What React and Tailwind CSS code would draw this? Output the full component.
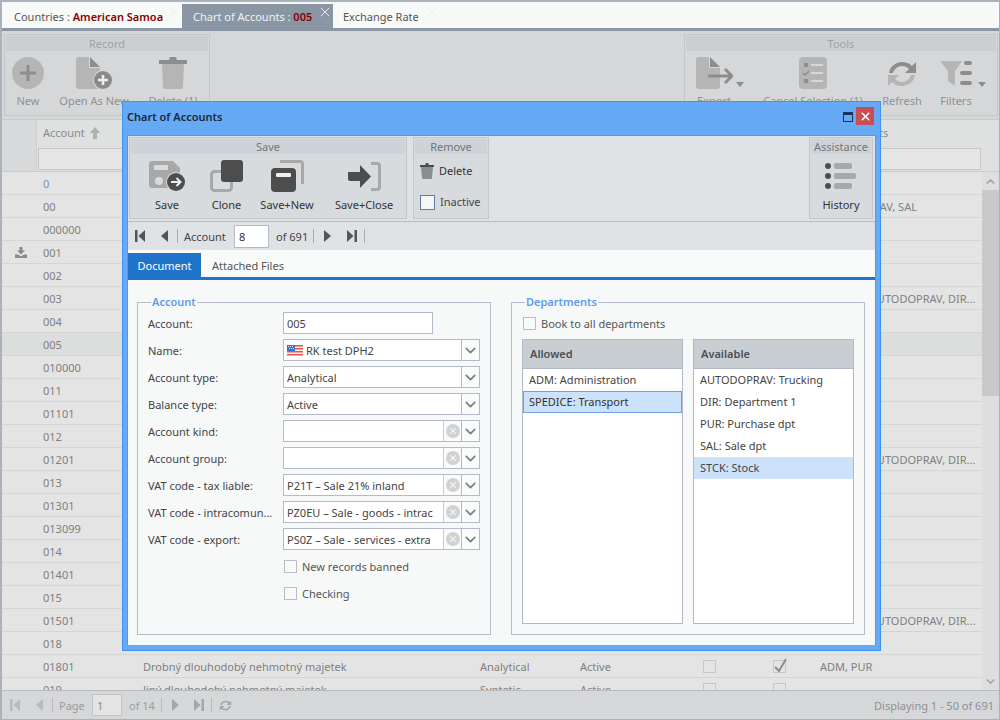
import React from "react";
import { ChevronDown, ChevronUp, X } from "lucide-react";

const rows = [
  { a: "0", blue: true },
  { a: "00", dep: "AUTODOPRAV, SAL" },
  { a: "000000" },
  { a: "001", icon: true },
  { a: "002" },
  { a: "003", dep: "ADM, AUTODOPRAV, DIR...", far: true },
  { a: "004" },
  { a: "005", sel: true },
  { a: "010000" },
  { a: "011" },
  { a: "01101" },
  { a: "012" },
  { a: "01201", dep: "ADM, AUTODOPRAV, DIR...", far: true },
  { a: "013" },
  { a: "01301" },
  { a: "013099" },
  { a: "014" },
  { a: "01401" },
  { a: "015" },
  { a: "01501", dep: "ADM, AUTODOPRAV, DIR...", far: true },
  { a: "018" },
  { a: "01801", name: "Drobný dlouhodobý nehmotný majetek", type: "Analytical", bal: "Active", box: true, check: true, dep: "ADM, PUR" },
  { a: "019", name: "Jiný dlouhodobý nehmotný majetek", type: "Syntetic", bal: "Active", box: true, box2: true },
];

function Group({ title, className, children }) {
  return (
    <div className={"flex flex-col border border-[#c4c6c9] p-px " + className}>
      <div className="h-[15px] shrink-0 bg-[#cccfd2] text-center text-[11px] leading-[15px] text-[#a0a2a5]">{title}</div>
      <div className="relative flex-1 overflow-hidden">{children}</div>
    </div>
  );
}

function ToolBtn({ label, width, children }) {
  return (
    <div className="flex shrink-0 flex-col items-center pt-[6px]" style={{ width }}>
      <div className="h-[32px]">{children}</div>
      <div className="mt-[4px] whitespace-nowrap text-[11px] leading-[16px] text-[#8f9194]">{label}</div>
    </div>
  );
}

function DocShape() {
  return (
    <>
      <path d="M3 0h10v11h11v18a3 3 0 0 1-3 3H3a3 3 0 0 1-3-3V3a3 3 0 0 1 3-3z" fill="#b5b5b5" />
      <path d="M14 0l10 10H14z" fill="#8d8d8d" />
    </>
  );
}

function MainToolbar() {
  return (
    <div className="flex h-[88px] shrink-0 justify-between bg-[#d6d7d9] pl-[2px] pr-[1px] pt-[3px]">
      <Group title="Record" className="h-[82px] w-[206px]">
        <div className="flex">
          <ToolBtn label="New" width={44}>
            <svg width="32" height="32" viewBox="0 0 32 32">
              <circle cx="16" cy="16" r="16" fill="#b5b5b5" />
              <path d="M16 8v16M8 16h16" stroke="#8d8d8d" strokeWidth="3" />
            </svg>
          </ToolBtn>
          <ToolBtn label="Open As New" width={88}>
            <svg width="37" height="33" viewBox="0 0 37 33">
              <DocShape />
              <circle cx="27" cy="23" r="10" fill="#d6d7d9" />
              <circle cx="27" cy="23" r="9" fill="#8a8a8a" />
              <path d="M27 18v10M22 23h10" stroke="#eee" strokeWidth="2.5" />
            </svg>
          </ToolBtn>
          <ToolBtn label="Delete (1)" width={70}>
            <svg width="28" height="32" viewBox="0 0 28 32">
              <path d="M0 3h10l1-3h6l1 3h10v4H0z" fill="#8d8d8d" />
              <path d="M3 7h22l-1 23a2 2 0 0 1-2 2H6a2 2 0 0 1-2-2z" fill="#b5b5b5" />
            </svg>
          </ToolBtn>
        </div>
      </Group>
      <Group title="Tools" className="h-[82px] w-[314px]">
        <div className="flex">
          <div className="flex w-[50px] shrink-0 justify-end">
            <ToolBtn label="Export" width={44}>
              <svg width="37" height="32" viewBox="0 0 37 32">
                <DocShape />
                <path d="M12 19h23M29 12l7 7-7 7" fill="none" stroke="#8d8d8d" strokeWidth="3" />
              </svg>
            </ToolBtn>
          </div>
          <svg className="mt-[31px] shrink-0" width="8" height="5" viewBox="0 0 8 5">
            <path d="M0 0h8L4 5z" fill="#8d8d8d" />
          </svg>
          <ToolBtn label="Cancel Selection (1)" width={138}>
            <svg width="28" height="32" viewBox="0 0 28 32">
              <rect width="28" height="32" rx="4" fill="#b5b5b5" />
              <path d="M5 6h4v4H5zM5 22h4v4H5z" fill="#8d8d8d" />
              <path d="M4 16l2 2 4-4" fill="none" stroke="#8d8d8d" strokeWidth="1.5" />
              <path d="M12 8h12M12 16h12M12 24h12" stroke="#d6d7d9" strokeWidth="2" />
            </svg>
          </ToolBtn>
          <ToolBtn label="Refresh" width={40}>
            <svg className="mt-[2px]" width="32" height="30" viewBox="0 0 32 30">
              <path d="M3 14C4 7 10 3 16 3c4 0 7 1 10 4l4-4v11H19l4-4c-2-2-4-3-7-3-4 0-8 3-9 7z" fill="#8d8d8d" />
              <path d="M29 16c-1 7-7 11-13 11-4 0-7-1-10-4l-4 4V16h11l-4 4c2 2 4 3 7 3 4 0 8-3 9-7z" fill="#b5b5b5" />
            </svg>
          </ToolBtn>
          <div className="flex w-[56px] shrink-0 justify-end">
            <ToolBtn label="Filters" width={44}>
              <svg className="mt-[3px]" width="33" height="26" viewBox="0 0 33 26">
                <path d="M0 1h22l-7 10v15l-7-5V11z" fill="#b5b5b5" />
                <rect x="24" y="1" width="8" height="4" rx="2" fill="#8d8d8d" />
                <rect x="20" y="11" width="12" height="4" rx="2" fill="#8d8d8d" />
                <rect x="20" y="21" width="12" height="4" rx="2" fill="#8d8d8d" />
              </svg>
            </ToolBtn>
          </div>
          <svg className="mt-[31px] shrink-0" width="8" height="5" viewBox="0 0 8 5">
            <path d="M0 0h8L4 5z" fill="#8d8d8d" />
          </svg>
        </div>
      </Group>
    </div>
  );
}

function GridCheck({ on }) {
  return (
    <div className="relative h-[13px] w-[13px] border border-[#c6c7c8]">
      {on && (
        <svg className="absolute -left-px -top-[3px]" width="15" height="16" viewBox="0 0 15 16">
          <path d="M2 9l4 4 7-12" fill="none" stroke="#8d8d8d" strokeWidth="2" />
        </svg>
      )}
    </div>
  );
}

function Grid() {
  return (
    <div className="flex min-h-0 flex-1 flex-col bg-[#e4e4e4] text-[11px] text-[#808080]">
      <div className="flex h-[53px] shrink-0 border-y border-[#c8cacc] bg-[#dfe0e0]">
        <div className="w-[35px] shrink-0 border-r border-[#cfd0d2] bg-[#d8d9db]" />
        <div className="flex-1">
          <div className="flex h-[28px] items-center pb-[2px] pl-[6px] text-[#8a8a8a]">
            <div className="flex w-[777px] shrink-0 items-center">
              Account
              <svg className="ml-[5px]" width="10" height="12" viewBox="0 0 10 12">
                <path d="M5 0l5 6H7v6H3V6H0z" fill="#b0b0b0" />
              </svg>
            </div>
            Departments
          </div>
          <div className="ml-[1px] mr-[18px] h-[22px] border border-[#c4c6c8] bg-[#e6e6e6]" />
        </div>
      </div>
      <div className="flex min-h-0 flex-1">
        <div className="min-w-0 flex-1 overflow-hidden">
          {rows.map((r) => (
            <div key={r.a} className={"flex h-[23px] shrink-0 items-center border-b border-[#d4d5d5] " + (r.sel ? "bg-[#dcdddd]" : "")}>
              <div className="flex w-[36px] shrink-0 justify-center pl-[2px]">
                {r.icon && (
                  <svg width="12" height="11" viewBox="0 0 12 11">
                    <path d="M4.5 0h3v3.5H10L6 7.5 2 3.5h2.5zM0 7.5h3l3 2 3-2h3V11H0z" fill="#8a8a8a" />
                  </svg>
                )}
              </div>
              <div className={"w-[105px] shrink-0 pl-[5px] pt-[2px] " + (r.blue ? "text-[#7b93ad]" : "")}>{r.a}</div>
              <div className="w-[337px] shrink-0 whitespace-nowrap pt-[2px]">{r.name}</div>
              <div className="w-[100px] shrink-0 pt-[2px]">{r.type}</div>
              <div className="w-[123px] shrink-0 pt-[2px]">{r.bal}</div>
              <div className="w-[70px] shrink-0">{r.box && <GridCheck />}</div>
              <div className="w-[47px] shrink-0">{(r.check || r.box2) && <GridCheck on={r.check} />}</div>
              <div className={"whitespace-nowrap pt-[2px] " + (r.far ? "pl-[19px]" : "")}>{r.dep}</div>
            </div>
          ))}
        </div>
        <div className="flex w-[17px] shrink-0 flex-col bg-[#dedede]">
          <div className="flex h-[18px] shrink-0 items-center justify-center">
            <ChevronUp size={13} strokeWidth={3} color="#a8a8a8" />
          </div>
          <div className="h-[206px] shrink-0 bg-[#c9c9c9]" />
          <div className="flex-1" />
          <div className="flex h-[18px] shrink-0 items-center justify-center">
            <ChevronDown size={13} strokeWidth={3} color="#a8a8a8" />
          </div>
        </div>
      </div>
    </div>
  );
}

function NavGlyph({ kind, color }) {
  const d = {
    first: "M0 0h2.5v12H0zM10 0v12L3.5 6z",
    prev: "M8 0v12L1 6z",
    next: "M1 0v12l7-6z",
    last: "M0 0v12l6.5-6zM7.5 0H10v12H7.5z",
  }[kind];
  return (
    <svg width="11" height="12" viewBox="0 0 11 12" className="shrink-0">
      <path d={d} fill={color} />
    </svg>
  );
}

function Pager() {
  return (
    <div className="flex h-[29px] shrink-0 items-center border-t border-[#b8bcc0] bg-[#d6d7d9] pl-[8px] pr-[5px] text-[11px] text-[#9a9c9e]">
      <NavGlyph kind="first" color="#b8babc" />
      <div className="w-[14px]" />
      <NavGlyph kind="prev" color="#b8babc" />
      <div className="ml-[6px] h-[14px] w-px bg-[#b8babc]" />
      <span className="ml-[6px] w-[33px] pt-[2px]">Page</span>
      <div className="flex h-[22px] w-[30px] items-center border border-[#c2c4c6] bg-[#e4e4e4] pl-[4px] pt-[2px] text-[#8c8c8c]">1</div>
      <span className="ml-[7px] w-[32px] pt-[2px]">of 14</span>
      <div className="h-[14px] w-px bg-[#b8babc]" />
      <div className="ml-[9px]"><NavGlyph kind="next" color="#a4a6a8" /></div>
      <div className="ml-[12px]"><NavGlyph kind="last" color="#a4a6a8" /></div>
      <div className="ml-[6px] h-[14px] w-px bg-[#b8babc]" />
      <svg className="ml-[7px]" width="13" height="13" viewBox="0 0 32 30">
        <path d="M3 14C4 7 10 3 16 3c4 0 7 1 10 4l4-4v11H19l4-4c-2-2-4-3-7-3-4 0-8 3-9 7z" fill="#a4a6a8" />
        <path d="M29 16c-1 7-7 11-13 11-4 0-7-1-10-4l-4 4V16h11l-4 4c2 2 4 3 7 3 4 0 8-3 9-7z" fill="#a4a6a8" />
      </svg>
      <span className="ml-auto pt-[2px] text-[#8f9193]">Displaying 1 - 50 of 691</span>
    </div>
  );
}

function SaveBtn({ label, width, children }) {
  return (
    <div className="flex shrink-0 flex-col items-center" style={{ width }}>
      <div className="flex h-[32px] items-center">{children}</div>
      <div className="mt-[5px] whitespace-nowrap text-[11px] leading-[16px] text-[#333]">{label}</div>
    </div>
  );
}

function ModalGroup({ title, className, children }) {
  return (
    <div className={"flex h-[82px] shrink-0 flex-col border border-[#c3c7ca] bg-[#d8dbde] p-px " + className}>
      <div className="h-[15px] shrink-0 bg-[#ced3d8] text-center text-[11px] leading-[15px] text-[#72767a]">{title}</div>
      {children}
    </div>
  );
}

function ModalToolbar() {
  return (
    <div className="flex h-[86px] shrink-0 border-b border-[#b7bcc0] bg-[#dfe2e5] pl-[1px] pr-[2px] pt-[1px]">
      <ModalGroup title="Save" className="w-[278px]">
        <div className="flex pl-[6px] pt-[6px]">
          <SaveBtn label="Save" width={60}>
            <svg width="37" height="30" viewBox="0 0 37 30">
              <path d="M3 0h21l7 7v20H3a3 3 0 0 1-3-3V3a3 3 0 0 1 3-3z" fill="#a8a8a8" />
              <path d="M5 4h14v5H5z" fill="#d8dbde" />
              <circle cx="10" cy="20" r="4" fill="#d8dbde" />
              <circle cx="27" cy="21" r="10" fill="#d8dbde" />
              <circle cx="27" cy="21" r="9" fill="#4d4d4d" />
              <path d="M22 21h9M27.5 17l4 4-4 4" fill="none" stroke="#eee" strokeWidth="2" />
            </svg>
          </SaveBtn>
          <SaveBtn label="Clone" width={59}>
            <svg width="33" height="32" viewBox="0 0 33 32">
              <rect x="1.5" y="11.5" width="20" height="19" rx="3" fill="none" stroke="#a8a8a8" strokeWidth="3" />
              <rect x="11" y="0" width="22" height="22" rx="3" fill="#4d4d4d" />
            </svg>
          </SaveBtn>
          <SaveBtn label="Save+New" width={62}>
            <svg width="33" height="32" viewBox="0 0 33 32">
              <path d="M9 1.5h20a2.5 2.5 0 0 1 2.5 2.5v20" fill="none" stroke="#a8a8a8" strokeWidth="3" />
              <rect x="0" y="8" width="25" height="24" rx="4" fill="#4d4d4d" />
              <rect x="5" y="13" width="15" height="4" rx="1" fill="#eee" />
            </svg>
          </SaveBtn>
          <SaveBtn label="Save+Close" width={92}>
            <svg width="33" height="29" viewBox="0 0 33 29">
              <path d="M0 10h12V3l11 11.5L12 26v-7H2a2 2 0 0 1-2-2z" fill="#4d4d4d" />
              <path d="M23 1.5h6a2.5 2.5 0 0 1 2.5 2.5v21a2.5 2.5 0 0 1-2.5 2.5h-6" fill="none" stroke="#a8a8a8" strokeWidth="3" />
            </svg>
          </SaveBtn>
        </div>
      </ModalGroup>
      <ModalGroup title="Remove" className="ml-[6px] w-[76px]">
        <div className="mt-[9px] flex h-[16px] items-center pl-[5px] text-[11px] text-[#333]">
          <svg width="14" height="16" viewBox="0 0 14 16">
            <path d="M0 2h5l1-2h2l1 2h5v2H0z" fill="#4d4d4d" />
            <path d="M1 4h12l-1 11a1 1 0 0 1-1 1H3a1 1 0 0 1-1-1z" fill="#8d8d8d" />
          </svg>
          <span className="ml-[5px]">Delete</span>
        </div>
        <div className="mt-[15px] flex h-[16px] items-center pl-[5px] text-[11px] text-[#444]">
          <div className="h-[15px] w-[15px] shrink-0 border border-[#5f7d9c] bg-[#f4f6f8]" />
          <span className="ml-[5px]">Inactive</span>
        </div>
      </ModalGroup>
      <ModalGroup title="Assistance" className="ml-auto w-[64px]">
        <div className="flex flex-col items-center pt-[8px]">
          <svg width="32" height="28" viewBox="0 0 32 28">
            <circle cx="3" cy="4" r="3" fill="#4d4d4d" />
            <circle cx="3" cy="14" r="3" fill="#4d4d4d" />
            <circle cx="3" cy="24" r="3" fill="#4d4d4d" />
            <rect x="9" y="1" width="18" height="6" rx="2" fill="#a8a8a8" />
            <rect x="9" y="11" width="22" height="6" rx="2" fill="#a8a8a8" />
            <rect x="9" y="21" width="18" height="6" rx="2" fill="#a8a8a8" />
          </svg>
          <div className="mt-[7px] text-[11px] leading-[16px] text-[#333]">History</div>
        </div>
      </ModalGroup>
    </div>
  );
}

function Sep() {
  return <div className="h-[14px] w-px bg-[#a9adb1]" />;
}

function ModalNav() {
  return (
    <div className="flex h-[28px] shrink-0 items-center bg-[#dfe2e5] pl-[7px] text-[11px] text-[#444]">
      <NavGlyph kind="first" color="#555" />
      <div className="w-[14px]" />
      <NavGlyph kind="prev" color="#555" />
      <div className="ml-[6px]"><Sep /></div>
      <span className="ml-[6px] w-[50px] pt-[2px]">Account</span>
      <div className="flex h-[23px] w-[35px] items-center border border-[#b5bac9] bg-white pl-[4px] pt-[2px] text-[#333]">8</div>
      <span className="ml-[7px] w-[37px] pt-[2px]">of 691</span>
      <Sep />
      <div className="ml-[9px]"><NavGlyph kind="next" color="#555" /></div>
      <div className="ml-[13px]"><NavGlyph kind="last" color="#555" /></div>
      <div className="ml-[6px]"><Sep /></div>
    </div>
  );
}

function Checkbox({ label }) {
  return (
    <div className="flex items-center text-[11px] text-[#555]">
      <div className="h-[13px] w-[13px] shrink-0 border border-[#b9bdc4] bg-[#f8fafa]" />
      <span className="ml-[5px] pt-[2px]">{label}</span>
    </div>
  );
}

function UsFlag() {
  return (
    <svg className="mr-[3px] shrink-0" width="16" height="11" viewBox="0 0 16 11">
      <rect width="16" height="11" fill="#f4f4f4" />
      <path d="M0 0h16v1.5H0zM0 3h16v1.5H0zM0 6h16v1.5H0zM0 9h16v1.5H0z" fill="#e2574c" />
      <rect width="8" height="6" fill="#3f6fc0" />
      <path d="M1 1h1v1H1zM3 1h1v1H3zM5 1h1v1H5zM2 3h1v1H2zM4 3h1v1H4zM6 3h1v1H6z" fill="#e6ecf7" />
    </svg>
  );
}

function FormRow({ label, children }) {
  return (
    <div className="mb-[5px] flex h-[22px] items-center">
      <div className="w-[135px] shrink-0 whitespace-nowrap pt-[2px] text-[11px] text-[#444]">{label}</div>
      {children}
    </div>
  );
}

function Combo({ value, flag, clear }) {
  return (
    <div className="flex h-[22px] w-[197px] shrink-0 border border-[#b5bac9] bg-white text-[11px] text-[#444]">
      <div className="flex min-w-0 flex-1 items-center overflow-hidden whitespace-nowrap pl-[3px]">
        {flag && <UsFlag />}
        {value && <span className="pt-[2px]">{value}</span>}
      </div>
      {clear && (
        <div className="flex w-[18px] shrink-0 items-center justify-center border-l border-[#c8ccd6] bg-[#fafbfb]">
          <div className="flex h-[14px] w-[14px] items-center justify-center rounded-full bg-[#d2d2d2]">
            <X size={10} strokeWidth={2.5} color="#fff" />
          </div>
        </div>
      )}
      <div className="flex w-[18px] shrink-0 items-center justify-center border-l border-[#b5bac9] bg-[#fafbfb]">
        <ChevronDown size={17} strokeWidth={2.5} color="#7d8287" />
      </div>
    </div>
  );
}

function AccountSet() {
  return (
    <fieldset className="h-[341px] w-[354px] shrink-0 border border-[#b7bccd] px-[10px] pb-0">
      <legend className="ml-[3px] px-[1px] text-[11px] font-semibold leading-[16px] text-[#5f9bf0]">Account</legend>
      <div className="pt-[2px]">
        <FormRow label="Account:">
          <div className="flex h-[22px] w-[150px] items-center border border-[#b5bac9] bg-white pl-[3px] pt-[2px] text-[11px] text-[#444]">005</div>
        </FormRow>
        <FormRow label="Name:"><Combo value="RK test DPH2" flag /></FormRow>
        <FormRow label="Account type:"><Combo value="Analytical" /></FormRow>
        <FormRow label="Balance type:"><Combo value="Active" /></FormRow>
        <FormRow label="Account kind:"><Combo clear /></FormRow>
        <FormRow label="Account group:"><Combo clear /></FormRow>
        <FormRow label="VAT code - tax liable:"><Combo clear value="P21T – Sale 21% inland" /></FormRow>
        <FormRow label="VAT code - intracomun..."><Combo clear value="PZ0EU – Sale - goods - intrac" /></FormRow>
        <FormRow label="VAT code - export:"><Combo clear value="PS0Z – Sale - services - extra" /></FormRow>
        <div className="mb-[5px] flex h-[22px] items-center pl-[136px]"><Checkbox label="New records banned" /></div>
        <div className="flex h-[22px] items-center pl-[136px]"><Checkbox label="Checking" /></div>
      </div>
    </fieldset>
  );
}

function DeptList({ title, items, focus, sel }) {
  return (
    <div className="flex h-[285px] w-[161px] flex-col border border-[#b3b9c6] bg-white text-[11px]">
      <div className="flex h-[29px] shrink-0 items-center border-b border-[#b3b9c6] bg-[#c9ced2] pl-[7px] font-semibold text-[#4a4f55]">{title}</div>
      {items.map((it) => (
        <div
          key={it}
          className={
            "flex h-[22px] shrink-0 items-center " +
            (it === focus
              ? "border border-[#6ea2e0] bg-[#cce2fa] pl-[5px] text-[#333]"
              : it === sel
                ? "bg-[#cce2fa] pl-[6px] text-[#444]"
                : "pl-[6px] text-[#444]")
          }
        >
          {it}
        </div>
      ))}
    </div>
  );
}

function DepartmentsSet() {
  return (
    <fieldset className="ml-[20px] h-[341px] w-[354px] shrink-0 border border-[#b7bccd] px-[10px] pb-0">
      <legend className="ml-[3px] px-[1px] text-[11px] font-semibold leading-[16px] text-[#5f9bf0]">Departments</legend>
      <div className="mb-[5px] mt-[2px] flex h-[22px] items-center pl-[1px]"><Checkbox label="Book to all departments" /></div>
      <div className="flex gap-[10px]">
        <DeptList title="Allowed" items={["ADM: Administration", "SPEDICE: Transport"]} focus="SPEDICE: Transport" />
        <DeptList
          title="Available"
          items={["AUTODOPRAV: Trucking", "DIR: Department 1", "PUR: Purchase dpt", "SAL: Sale dpt", "STCK: Stock"]}
          sel="STCK: Stock"
        />
      </div>
    </fieldset>
  );
}

function Modal() {
  return (
    <div className="absolute left-[120px] top-[99px] flex h-[550px] w-[759px] flex-col border border-[#3f93ee] bg-[#66aaf6]">
      <div className="flex h-[33px] shrink-0 items-start pl-[4px] pr-[6px] pt-[5px]">
        <span className="pt-[1px] text-[11px] font-semibold leading-[18px] text-[#1c2733]">Chart of Accounts</span>
        <svg className="ml-auto mt-[5px]" width="10" height="10" viewBox="0 0 10 10">
          <rect x="0.5" y="0.5" width="9" height="9" fill="none" stroke="#17365d" />
          <rect x="0" y="0" width="10" height="3" fill="#17365d" />
        </svg>
        <div className="ml-[3px] flex h-[18px] w-[18px] items-center justify-center bg-[#c94f52]">
          <X size={13} strokeWidth={3} color="#fff" />
        </div>
      </div>
      <div className="mx-[4px] flex min-h-0 flex-1 flex-col border-x border-t border-[#4a9bf3] bg-[#f7f9f9]">
        <ModalToolbar />
        <ModalNav />
        <div className="flex h-[30px] shrink-0 items-end border-b-[3px] border-[#1f74c9] bg-[#f9fbfb] text-[11px]">
          <div className="flex h-[24px] w-[73px] items-center justify-center bg-[#1f74c9] pt-[2px] text-white">Document</div>
          <div className="flex h-[24px] items-center pl-[11px] pt-[2px] text-[#555]">Attached Files</div>
        </div>
        <div className="flex pl-[9px] pt-[14px]">
          <AccountSet />
          <DepartmentsSet />
        </div>
      </div>
      <div className="h-[5px] shrink-0" />
    </div>
  );
}

function Tab({ children, active, className }) {
  return (
    <div
      className={
        "relative flex shrink-0 items-center whitespace-nowrap pt-[2px] text-[11px] " +
        (active ? "bg-[#8a96a3] text-[#f0f2f4] " : "text-[#555] ") +
        className
      }
    >
      {children}
      <X className="absolute right-0 top-0" size={16} strokeWidth={1.5} color={active ? "#e8eaec" : "#eef1f1"} />
    </div>
  );
}

export default function App() {
  return (
    <div className="relative flex h-[720px] w-[1000px] flex-col overflow-hidden border-b border-l-2 border-r border-t-2 border-[#aab2bc] bg-[#d6d7d9] font-['Noto_Sans',sans-serif]">
      <div className="flex h-[29px] shrink-0 border-b-[3px] border-[#8a96a3] bg-[#f8faf9] pt-[2px]">
        <Tab className="w-[180px] pl-[12px]">
          Countries :&nbsp;<b className="font-semibold text-[#8b0000]">American Samoa</b>
        </Tab>
        <Tab active className="w-[151px] pl-[11px]">
          Chart of Accounts :&nbsp;<b className="font-semibold text-[#8b0000]">005</b>
        </Tab>
        <Tab className="w-[107px] pl-[10px]">Exchange Rate</Tab>
      </div>
      <MainToolbar />
      <Grid />
      <Pager />
      <Modal />
    </div>
  );
}
